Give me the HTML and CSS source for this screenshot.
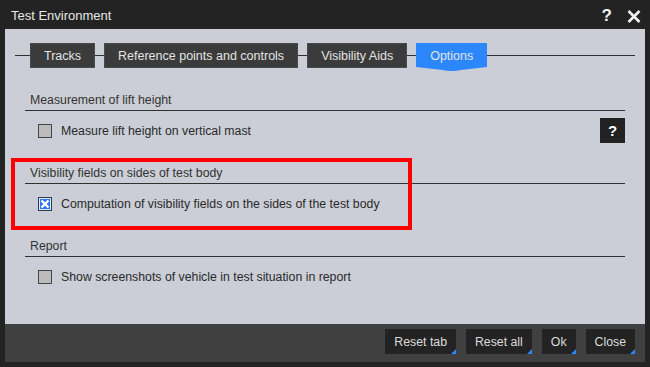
FILE: index.html
```html
<!DOCTYPE html>
<html lang="en">
<head>
  <meta charset="UTF-8" />
  <title>Test Environment</title>
  <link rel="stylesheet" href="styles.css">
</head>
<body>
  <div class="dialog">
    <header class="titlebar">
      <span class="title">Test Environment</span>
      <div class="title-actions">
        <span class="title-help">?</span>
        <svg class="title-close" width="14" height="13" viewBox="0 0 14 13">
          <path d="M1.5 1 L12.5 12 M12.5 1 L1.5 12" />
        </svg>
      </div>
    </header>

    <main class="panel">
      <nav class="tabs">
        <a href="#" class="tab">Tracks</a>
        <a href="#" class="tab">Reference points and controls</a>
        <a href="#" class="tab">Visibility Aids</a>
        <a href="#" class="tab active">Options</a>
      </nav>

      <!-- Measurement -->
      <section class="group">
        <h3 class="group-title">Measurement of lift height</h3>
        <div class="option-row">
          <label class="check">
            <span class="box"></span>
            Measure lift height on vertical mast
          </label>
          <button class="help-btn" title="Help">?</button>
        </div>
      </section>

      <!-- Visibility fields -->
      <section class="group marked">
        <h3 class="group-title">Visibility fields on sides of test body</h3>
        <div class="option-row">
          <label class="check">
            <span class="box checked">
              <svg width="10" height="10" viewBox="0 0 10 10"><path d="M1.5 1.5 L8.5 8.5 M8.5 1.5 L1.5 8.5" /></svg>
            </span>
            Computation of visibility fields on the sides of the test body
          </label>
        </div>
      </section>

      <!-- Report -->
      <section class="group">
        <h3 class="group-title">Report</h3>
        <div class="option-row">
          <label class="check">
            <span class="box"></span>
            Show screenshots of vehicle in test situation in report
          </label>
        </div>
      </section>
    </main>

    <footer class="footer">
      <button class="btn">Reset tab</button>
      <button class="btn">Reset all</button>
      <button class="btn">Ok</button>
      <button class="btn">Close</button>
    </footer>
  </div>
</body>
</html>
```

FILE: styles.css
```css
:root {
  --frame: #232323;
  --panel: #cbced6;
  --footer: #404040;
  --tab: #3b3b3b;
  --accent: #2b87fb;
  --text: #2a2a2a;
  --line: #303030;
}
* { box-sizing: border-box; }
body {
  margin: 0;
  background: var(--frame);
  font-family: "Liberation Sans", Arial, sans-serif;
  font-size: 12.3px;
  color: var(--text);
}
.dialog {
  width: 650px;
  height: 367px;
  display: flex;
  flex-direction: column;
  padding: 0 5px 5px;
}

/* title bar */
.titlebar {
  height: 29px;
  display: flex;
  align-items: center;
  justify-content: space-between;
  padding: 0 4px 0 6px;
  color: #e8e8e8;
}
.title {
  font-size: 13px;
  padding-top: 1px;
}
.title-actions {
  display: flex;
  align-items: center;
  gap: 15px;
  padding-top: 3px;
}
.title-help {
  font-size: 17px;
  font-weight: 700;
  color: #f2f2f2;
}
.title-close path {
  stroke: #f2f2f2;
  stroke-width: 2.6;
  fill: none;
}

/* main panel */
.panel {
  height: 295px;
  background: var(--panel);
  padding: 14px 20px 0;
}
.tabs {
  display: flex;
  gap: 9px;
  margin: 0 -10px 22px;
  padding-left: 15px;
  height: 25px;
  background: linear-gradient(var(--line), var(--line)) 0 12px / 100% 1px no-repeat;
}
.tab {
  display: flex;
  align-items: center;
  height: 25px;
  padding: 0 13px;
  background: var(--tab);
  border: 1px solid #4a4a4a;
  color: #e4e4e4;
  text-decoration: none;
  font-size: 12.5px;
}
.tab.active {
  background: var(--accent);
  border-color: var(--accent);
  height: 28px;
  padding-bottom: 3px;
  clip-path: polygon(0 0, 100% 0, 100% 24px, 50% 28px, 0 24px);
}

/* option groups */
.group {
  margin-bottom: 20px;
}
.group-title {
  margin: 0;
  height: 21px;
  padding: 3px 0 0 5px;
  font-size: 12.3px;
  font-weight: 400;
  color: #333;
  border-bottom: 1px solid var(--line);
}
.option-row {
  display: flex;
  align-items: center;
  justify-content: space-between;
  height: 25px;
  margin-top: 7px;
  padding-left: 13px;
}
.check {
  display: flex;
  align-items: center;
  gap: 9px;
}
.box {
  width: 14px;
  height: 14px;
  border: 1px solid #444;
  background: #bcbcbc;
  display: flex;
  align-items: center;
  justify-content: center;
}
.box.checked {
  background: #2a78f2;
  border-color: #2b3a55;
  box-shadow: inset 0 0 0 1px #dfe8ff;
}
.box.checked path {
  stroke: #fff;
  stroke-width: 2.4;
}
.help-btn {
  width: 25px;
  height: 25px;
  border: none;
  background: #222;
  color: #fff;
  font-family: inherit;
  font-size: 15px;
  font-weight: 700;
  padding: 0;
}

/* red annotation frame */
.marked {
  position: relative;
}
.marked::after {
  content: "";
  position: absolute;
  left: -14px;
  top: -5px;
  width: 393px;
  height: 64px;
  border: 4px solid #ff0000;
}

/* footer */
.footer {
  height: 38px;
  background: var(--footer);
  display: flex;
  justify-content: flex-end;
  gap: 10px;
  padding: 5px 10px 0;
}
.btn {
  position: relative;
  height: 25px;
  padding: 0 9px;
  border: none;
  background: #232323;
  color: #dcdcdc;
  font-family: inherit;
  font-size: 12.3px;
}
.btn::after {
  content: "";
  position: absolute;
  right: 0;
  bottom: 0;
  border-style: solid;
  border-width: 0 0 5px 5px;
  border-color: transparent transparent var(--accent) transparent;
}
```
